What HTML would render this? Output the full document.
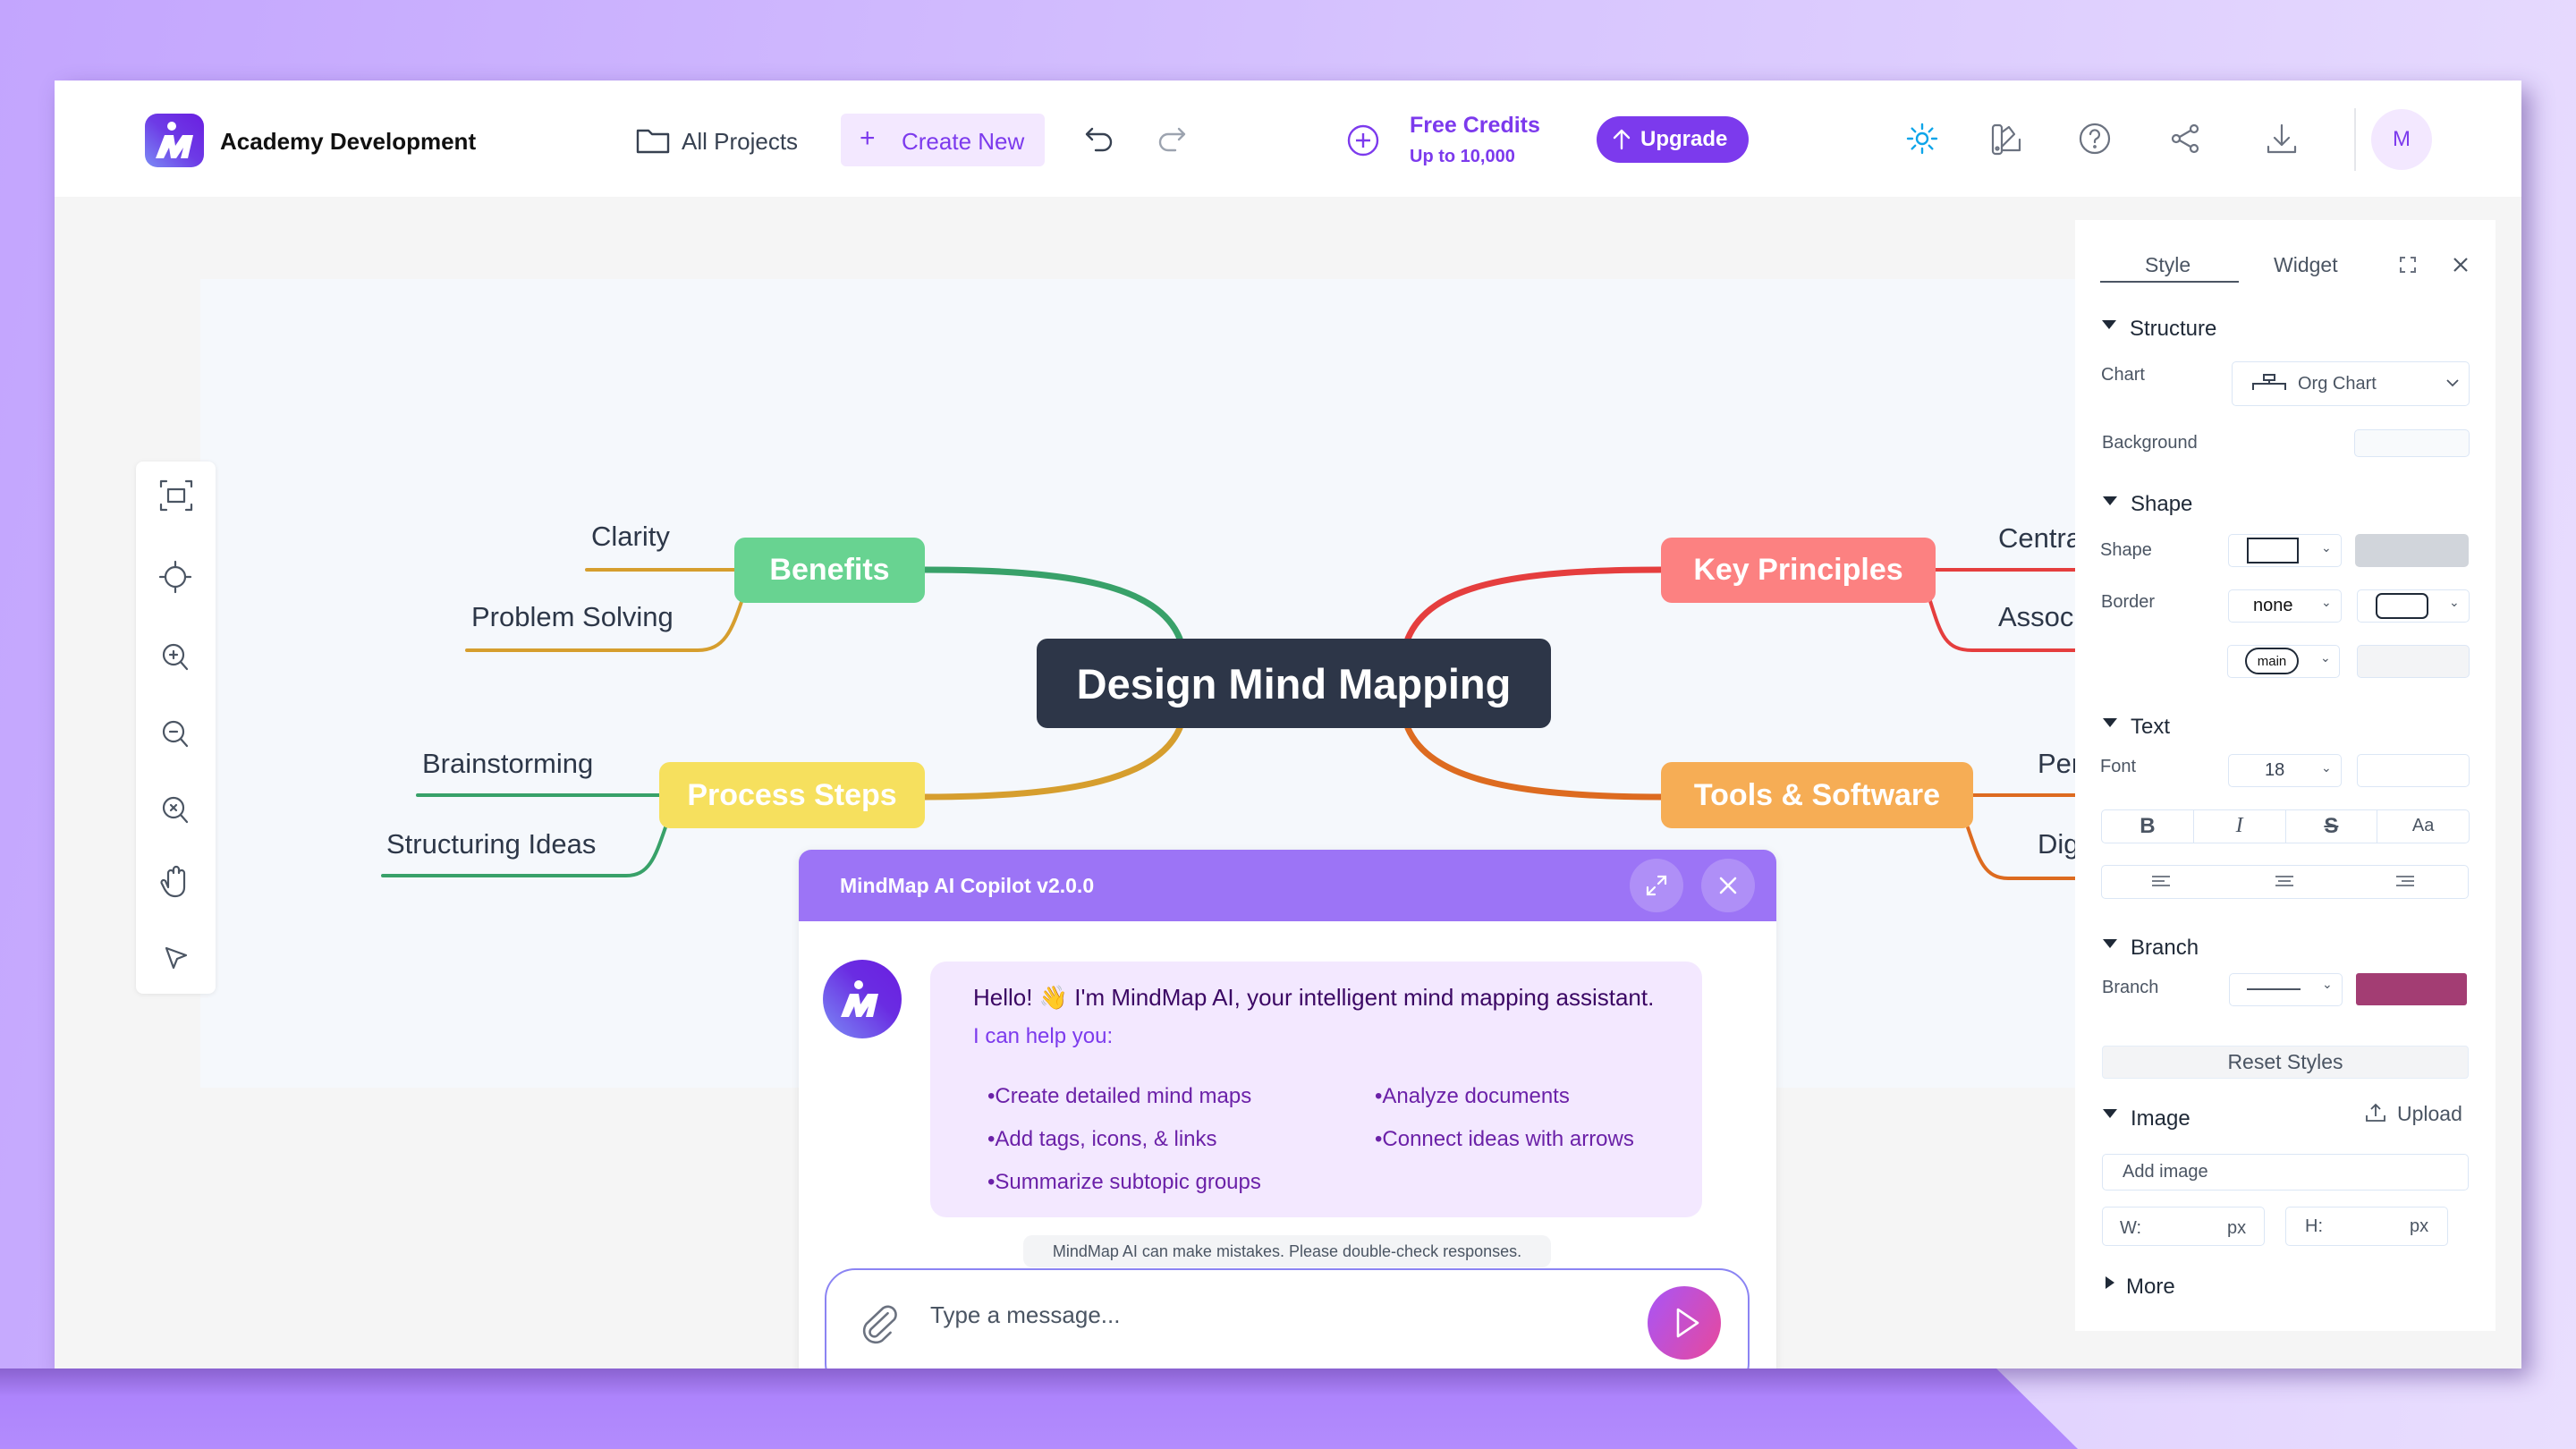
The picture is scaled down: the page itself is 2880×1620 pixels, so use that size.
<!DOCTYPE html>
<html><head><meta charset="utf-8"><style>
*{box-sizing:border-box;margin:0;padding:0}
body{width:2880px;height:1620px;overflow:hidden;position:relative;font-family:"Liberation Sans",sans-serif;background:linear-gradient(100deg,#c3a5fe 0%,#d6c3fe 50%,#e9defe 100%)}
.a{position:absolute}
.win{left:61px;top:90px;width:2758px;height:1440px;background:#f5f5f5;overflow:hidden;box-shadow:10px 10px 24px rgba(70,40,130,.45)}
.hdr{left:0;top:0;width:2758px;height:130px;background:#fff}
.t{white-space:nowrap}
.ico{stroke:#6b7280;fill:none;stroke-width:2.2;stroke-linecap:round;stroke-linejoin:round}
.lbl{font-size:20px;color:#4b5563}
.sec{font-size:24px;color:#1f2937}
.box{border:1.5px solid #dbe6f5;border-radius:5px;background:#fff}
.tri{width:0;height:0;border-left:8px solid transparent;border-right:8px solid transparent;border-top:10px solid #1f2937}
.chev{font-size:14px;color:#4b5563}
.node{color:#fff;font-weight:bold;border-radius:12px;display:flex;align-items:center;justify-content:center;white-space:nowrap}
.leaf{font-size:31px;color:#2d3748;white-space:nowrap}
.bul{font-size:24px;color:#6b21a8;white-space:nowrap}
</style></head><body>
<div class="a win">
 <div class="a hdr">
  <svg class="a" style="left:101px;top:37px" width="66" height="60" viewBox="0 0 66 60"><defs><linearGradient id="lg" x1="0" y1="1" x2="1" y2="0"><stop offset="0" stop-color="#7b8cf5"/><stop offset=".5" stop-color="#6d3be6"/><stop offset="1" stop-color="#6a1fe0"/></linearGradient></defs><rect width="66" height="60" rx="14" fill="url(#lg)"/><circle cx="30" cy="14" r="5" fill="#fff"/><path d="M12 50 L22 24 L32 24 L34 36 L42 24 L54 24 L48 50 L40 50 L43 38 L35 50 L29 50 L27 38 L21 50Z" fill="#fff"/></svg>
  <div class="a t" style="left:185px;top:53px;font-size:26px;font-weight:bold;color:#111">Academy Development</div>
  <svg class="a" style="left:650px;top:52px" width="38" height="30" viewBox="0 0 38 30"><path d="M2 4h12l4 4h18v20H2z" fill="none" stroke="#374151" stroke-width="2.4" stroke-linejoin="round"/></svg>
  <div class="a t" style="left:701px;top:53px;font-size:26px;color:#374151">All Projects</div>
  <div class="a" style="left:879px;top:37px;width:228px;height:59px;background:#f3e8ff;border-radius:6px"></div>
  <div class="a t" style="left:900px;top:48px;font-size:30px;color:#7c3aed">+</div>
  <div class="a t" style="left:947px;top:53px;font-size:26px;color:#7c3aed">Create New</div>
  <svg class="a" style="left:1150px;top:50px" width="36" height="32" viewBox="0 0 36 32"><path d="M10 4 L4 10 L10 16 M4 10 H22 A9 9 0 0 1 22 28 H14" fill="none" stroke="#374151" stroke-width="2.4" stroke-linecap="round" stroke-linejoin="round"/></svg>
  <svg class="a" style="left:1231px;top:50px" width="36" height="32" viewBox="0 0 36 32"><path d="M26 4 L32 10 L26 16 M32 10 H14 A9 9 0 0 0 14 28 H22" fill="none" stroke="#9ca3af" stroke-width="2.4" stroke-linecap="round" stroke-linejoin="round"/></svg>
  <svg class="a" style="left:1444px;top:48px" width="38" height="38" viewBox="0 0 38 38"><circle cx="19" cy="19" r="16" fill="none" stroke="#7c3aed" stroke-width="2.4"/><path d="M19 11v16M11 19h16" stroke="#7c3aed" stroke-width="2.4"/></svg>
  <div class="a t" style="left:1515px;top:36px;font-size:25px;font-weight:bold;color:#7c3aed">Free Credits</div>
  <div class="a t" style="left:1515px;top:74px;font-size:20px;font-weight:bold;color:#7c3aed">Up to 10,000</div>
  <div class="a" style="left:1724px;top:40px;width:170px;height:52px;background:#7c3aed;border-radius:26px"></div>
  <svg class="a" style="left:1740px;top:52px" width="24" height="28" viewBox="0 0 24 28"><path d="M12 24V4M4 12l8-8 8 8" fill="none" stroke="#fff" stroke-width="2.4" stroke-linecap="round" stroke-linejoin="round"/></svg>
  <div class="a t" style="left:1773px;top:52px;font-size:24px;font-weight:bold;color:#fff">Upgrade</div>
  <svg class="a" style="left:2069px;top:46px" width="38" height="38" viewBox="0 0 38 38"><g stroke="#0ea5e9" stroke-width="2.4" fill="none" stroke-linecap="round"><circle cx="19" cy="19" r="6"/><path d="M19 3v5M19 30v5M3 19h5M30 19h5M7.7 7.7l3.5 3.5M26.8 26.8l3.5 3.5M7.7 30.3l3.5-3.5M26.8 11.2l3.5-3.5"/></g></svg>
  <svg class="a" style="left:2163px;top:46px" width="40" height="40" viewBox="0 0 40 40"><g class="ico"><rect x="4" y="4" width="10" height="32" rx="3"/><path d="M14 12l8-6 6 8-14 14M14 32h20V20"/><circle cx="9" cy="30" r="1.5"/></g></svg>
  <svg class="a" style="left:2262px;top:46px" width="38" height="38" viewBox="0 0 38 38"><g class="ico"><circle cx="19" cy="19" r="16"/><path d="M14 14a5 5 0 1 1 7 5c-2 1-2 2-2 4"/><circle cx="19" cy="28" r=".8"/></g></svg>
  <svg class="a" style="left:2363px;top:46px" width="38" height="38" viewBox="0 0 38 38"><g class="ico"><circle cx="29" cy="8" r="4"/><circle cx="9" cy="19" r="4"/><circle cx="29" cy="30" r="4"/><path d="M13 17l12-7M13 21l12 7"/></g></svg>
  <svg class="a" style="left:2471px;top:46px" width="38" height="38" viewBox="0 0 38 38"><g class="ico"><path d="M19 4v22M11 18l8 8 8-8M4 28v6h30v-6"/></g></svg>
  <div class="a" style="left:2571px;top:31px;width:2px;height:70px;background:#e5e7eb"></div>
  <div class="a" style="left:2590px;top:32px;width:68px;height:68px;border-radius:50%;background:#f3e8ff;color:#7c3aed;font-size:24px;display:flex;align-items:center;justify-content:center">M</div>
 </div>

 <div class="a" style="left:163px;top:222px;width:2200px;height:904px;background:#f5f8fc"></div>
 <svg class="a" style="left:-61px;top:-90px" width="2880" height="1620" viewBox="0 0 2880 1620">
  <g fill="none" stroke-linecap="round">
   <path d="M1034 637 C1200 637 1295 655 1319 714" stroke="#38a169" stroke-width="7"/>
   <path d="M1034 891 C1200 891 1295 870 1319 814" stroke="#d69e2e" stroke-width="7"/>
   <path d="M1857 637 C1690 637 1598 655 1574 714" stroke="#e53e3e" stroke-width="7"/>
   <path d="M1857 891 C1690 891 1598 870 1574 814" stroke="#dd6b20" stroke-width="7"/>
   <path d="M656 637 H830" stroke="#d69e2e" stroke-width="4"/>
   <path d="M522 727 H780 C810 727 818 705 830 670" stroke="#d69e2e" stroke-width="4"/>
   <path d="M467 889 H740" stroke="#38a169" stroke-width="4"/>
   <path d="M428 979 H700 C725 979 732 960 744 925" stroke="#38a169" stroke-width="4"/>
   <path d="M2160 637 H2340" stroke="#e53e3e" stroke-width="4"/>
   <path d="M2158 672 C2170 710 2175 727 2205 727 H2340" stroke="#e53e3e" stroke-width="4"/>
   <path d="M2200 889 H2340" stroke="#dd6b20" stroke-width="4"/>
   <path d="M2200 925 C2212 960 2218 982 2245 982 H2340" stroke="#dd6b20" stroke-width="4"/>
  </g>
 </svg>
 <div class="a node" style="left:1098px;top:624px;width:575px;height:100px;background:#2d3648;font-size:47px">Design Mind Mapping</div>
 <div class="a node" style="left:760px;top:511px;width:213px;height:73px;background:#68d391;font-size:34px">Benefits</div>
 <div class="a node" style="left:676px;top:762px;width:297px;height:74px;background:#f6e05e;font-size:34px">Process Steps</div>
 <div class="a node" style="left:1796px;top:511px;width:307px;height:73px;background:#fc8181;font-size:34px">Key Principles</div>
 <div class="a node" style="left:1796px;top:762px;width:349px;height:74px;background:#f6ad55;font-size:34px">Tools &amp; Software</div>
 <div class="a leaf" style="left:600px;top:492px">Clarity</div>
 <div class="a leaf" style="left:466px;top:582px">Problem Solving</div>
 <div class="a leaf" style="left:411px;top:746px">Brainstorming</div>
 <div class="a leaf" style="left:371px;top:836px">Structuring Ideas</div>
 <div class="a leaf" style="left:2173px;top:494px">Central</div>
 <div class="a leaf" style="left:2173px;top:582px">Association</div>
 <div class="a leaf" style="left:2217px;top:746px">Per</div>
 <div class="a leaf" style="left:2217px;top:836px">Digital</div>

 <div class="a" style="left:91px;top:426px;width:89px;height:595px;background:#fff;border-radius:8px;box-shadow:0 1px 6px rgba(0,0,0,.08)"></div>
 <svg class="a" style="left:91px;top:426px" width="89" height="595" viewBox="0 0 89 595"><g stroke="#4b5563" stroke-width="2.2" fill="none" stroke-linecap="round" stroke-linejoin="round">
  <path d="M28 28v-6h6M56 22h6v6M62 48v6h-6M34 54h-6v-6"/><rect x="36" y="31" width="18" height="14"/>
  <circle cx="44" cy="129" r="11"/><path d="M44 112v6M44 140v6M27 129h6M55 129h6"/>
  <circle cx="42" cy="216" r="11"/><path d="M50 224l7 8M38 216h8M42 212v8"/>
  <circle cx="42" cy="302" r="11"/><path d="M50 310l7 8M38 302h8"/>
  <circle cx="42" cy="387" r="11"/><path d="M50 395l7 8M39 384l6 6M45 384l-6 6"/>
  <path d="M36 476v-16a3 3 0 0 1 6 0v-4a3 3 0 0 1 6 0v4a3 3 0 0 1 6 0v16c0 6-4 10-10 10s-9-3-12-8l-3-6a2.5 2.5 0 0 1 4-3z"/>
  <path d="M34 544l22 8-10 4-4 10z"/>
 </g></svg>

 <div class="a" style="left:832px;top:860px;width:1093px;height:640px;background:#fff;border-radius:14px 14px 0 0;box-shadow:0 2px 10px rgba(0,0,0,.08);overflow:hidden">
  <div class="a" style="left:0;top:0;width:1093px;height:80px;background:#9c74f6"></div>
  <div class="a t" style="left:46px;top:27px;font-size:23px;font-weight:bold;color:#fff">MindMap AI Copilot v2.0.0</div>
  <div class="a" style="left:929px;top:10px;width:60px;height:60px;border-radius:50%;background:rgba(255,255,255,.2)"></div>
  <svg class="a" style="left:944px;top:25px" width="30" height="30" viewBox="0 0 30 30"><path d="M17 5h8v8M25 5l-8 8M13 25H5v-8M5 25l8-8" fill="none" stroke="#fff" stroke-width="2.2" stroke-linecap="round"/></svg>
  <div class="a" style="left:1009px;top:10px;width:60px;height:60px;border-radius:50%;background:rgba(255,255,255,.2)"></div>
  <svg class="a" style="left:1027px;top:28px" width="24" height="24" viewBox="0 0 24 24"><path d="M4 4l16 16M20 4L4 20" stroke="#fff" stroke-width="2.6" stroke-linecap="round"/></svg>
  <svg class="a" style="left:27px;top:123px" width="88" height="88" viewBox="0 0 88 88"><defs><linearGradient id="ag" x1="0" y1="1" x2="1" y2="0"><stop offset="0" stop-color="#7b8cf5"/><stop offset=".6" stop-color="#6a2ce2"/><stop offset="1" stop-color="#6a1fe0"/></linearGradient></defs><circle cx="44" cy="44" r="44" fill="url(#ag)"/><circle cx="40" cy="28" r="5" fill="#fff"/><path d="M20 64 L30 38 L40 38 L42 50 L50 38 L62 38 L56 64 L48 64 L51 52 L43 64 L37 64 L35 52 L29 64Z" fill="#fff"/></svg>
  <div class="a" style="left:147px;top:125px;width:863px;height:286px;background:#f3e8ff;border-radius:18px"></div>
  <div class="a t" style="left:195px;top:150px;font-size:26px;color:#3b0764">Hello! 👋 I'm MindMap AI, your intelligent mind mapping assistant.</div>
  <div class="a t" style="left:195px;top:195px;font-size:24px;color:#7c3aed">I can help you:</div>
  <div class="a bul" style="left:211px;top:262px">•Create detailed mind maps</div>
  <div class="a bul" style="left:644px;top:262px">•Analyze documents</div>
  <div class="a bul" style="left:211px;top:310px">•Add tags, icons, &amp; links</div>
  <div class="a bul" style="left:644px;top:310px">•Connect ideas with arrows</div>
  <div class="a bul" style="left:211px;top:358px">•Summarize subtopic groups</div>
  <div class="a" style="left:251px;top:431px;width:590px;height:36px;background:#f3f4f6;border-radius:10px;font-size:18px;color:#4b5563;display:flex;align-items:center;justify-content:center">MindMap AI can make mistakes. Please double-check responses.</div>
  <div class="a" style="left:29px;top:468px;width:1034px;height:140px;border:2px solid #8b84f3;border-radius:34px;background:#fff"></div>
  <svg class="a" style="left:68px;top:505px" width="44" height="48" viewBox="0 0 44 48"><path d="M30 12 L14 32 a5 5 0 0 0 8 6 L38 18 a9 9 0 0 0 -14 -11 L8 27 a13 13 0 0 0 20 16 L36 33" fill="none" stroke="#6b7280" stroke-width="2.6" stroke-linecap="round" transform="rotate(8 22 24)"/></svg>
  <div class="a t" style="left:147px;top:505px;font-size:26px;color:#4b5563">Type a message...</div>
  <div class="a" style="left:949px;top:488px;width:82px;height:82px;border-radius:50%;background:linear-gradient(120deg,#a855f7,#e8489c)"></div>
  <svg class="a" style="left:975px;top:510px" width="36" height="38" viewBox="0 0 36 38"><path d="M8 4 L30 19 L8 34Z" fill="none" stroke="#fff" stroke-width="2.6" stroke-linejoin="round"/></svg>
 </div>

 <div class="a" style="left:2259px;top:156px;width:470px;height:1242px;background:#fff"></div>
 <div class="a" style="left:-61px;top:-90px;width:2880px;height:1620px;pointer-events:none">
  <div class="a t" style="left:2398px;top:283px;font-size:23px;color:#4b5563">Style</div>
  <div class="a" style="left:2348px;top:314px;width:155px;height:2px;background:#4b5563"></div>
  <div class="a t" style="left:2542px;top:283px;font-size:23px;color:#4b5563">Widget</div>
  <svg class="a" style="left:2682px;top:286px" width="20" height="20" viewBox="0 0 20 20"><path d="M2 7V2h5M13 2h5v5M18 13v5h-5M7 18H2v-5" fill="none" stroke="#6b7280" stroke-width="2"/></svg>
  <svg class="a" style="left:2741px;top:286px" width="20" height="20" viewBox="0 0 20 20"><path d="M3 3l14 14M17 3L3 17" stroke="#4b5563" stroke-width="2.2"/></svg>

  <div class="a tri" style="left:2350px;top:358px"></div><div class="a t sec" style="left:2381px;top:354px">Structure</div>
  <div class="a t lbl" style="left:2349px;top:408px">Chart</div>
  <div class="a box" style="left:2495px;top:404px;width:266px;height:50px"></div>
  <svg class="a" style="left:2517px;top:416px" width="40" height="24" viewBox="0 0 40 24"><path d="M14 3h12v6H14zM20 9v4M2 20v-7h36v7" fill="none" stroke="#374151" stroke-width="2"/></svg>
  <div class="a t lbl" style="left:2569px;top:418px">Org Chart</div>
  <svg class="a" style="left:2734px;top:423px" width="16" height="10" viewBox="0 0 16 10"><path d="M2 2l6 6 6-6" fill="none" stroke="#4b5563" stroke-width="1.8"/></svg>
  <div class="a t lbl" style="left:2350px;top:484px">Background</div>
  <div class="a box" style="left:2632px;top:480px;width:129px;height:31px;background:#f8fafc"></div>

  <div class="a tri" style="left:2351px;top:555px"></div><div class="a t sec" style="left:2382px;top:550px">Shape</div>
  <div class="a t lbl" style="left:2348px;top:604px">Shape</div>
  <div class="a box" style="left:2491px;top:597px;width:127px;height:37px"></div>
  <div class="a" style="left:2512px;top:601px;width:58px;height:29px;border:2px solid #1f2937"></div>
  <div class="a chev" style="left:2595px;top:604px">⌄</div>
  <div class="a" style="left:2633px;top:597px;width:127px;height:37px;background:#d1d5db;border-radius:5px"></div>
  <div class="a t lbl" style="left:2349px;top:662px">Border</div>
  <div class="a box" style="left:2491px;top:659px;width:127px;height:37px"></div>
  <div class="a t" style="left:2519px;top:666px;font-size:20px;color:#111">none</div>
  <div class="a chev" style="left:2595px;top:665px">⌄</div>
  <div class="a box" style="left:2635px;top:659px;width:126px;height:37px"></div>
  <div class="a" style="left:2656px;top:663px;width:59px;height:29px;border:2px solid #1f2937;border-radius:7px"></div>
  <div class="a chev" style="left:2738px;top:665px">⌄</div>
  <div class="a box" style="left:2490px;top:721px;width:126px;height:37px"></div>
  <div class="a" style="left:2510px;top:724px;width:60px;height:30px;border:2px solid #1f2937;border-radius:15px;font-size:15px;color:#111;display:flex;align-items:center;justify-content:center">main</div>
  <div class="a chev" style="left:2594px;top:727px">⌄</div>
  <div class="a box" style="left:2635px;top:721px;width:126px;height:37px;background:#f3f4f6"></div>

  <div class="a tri" style="left:2351px;top:803px"></div><div class="a t sec" style="left:2382px;top:799px">Text</div>
  <div class="a t lbl" style="left:2348px;top:846px">Font</div>
  <div class="a box" style="left:2491px;top:843px;width:127px;height:37px"></div>
  <div class="a t" style="left:2532px;top:850px;font-size:20px;color:#374151">18</div>
  <div class="a chev" style="left:2595px;top:850px">⌄</div>
  <div class="a box" style="left:2635px;top:843px;width:126px;height:37px"></div>
  <div class="a box" style="left:2349px;top:905px;width:412px;height:38px;display:flex">
   <div style="flex:1;border-right:1.5px solid #dbe6f5;text-align:center;font-size:24px;font-weight:bold;color:#4b5563;line-height:35px">B</div>
   <div style="flex:1;border-right:1.5px solid #dbe6f5;text-align:center;font-size:24px;font-style:italic;color:#4b5563;line-height:35px;font-family:'Liberation Serif',serif">I</div>
   <div style="flex:1;border-right:1.5px solid #dbe6f5;text-align:center;font-size:24px;font-weight:bold;color:#4b5563;line-height:35px;text-decoration:line-through">S</div>
   <div style="flex:1;text-align:center;font-size:20px;color:#4b5563;line-height:35px">Aa</div>
  </div>
  <div class="a box" style="left:2349px;top:967px;width:411px;height:38px"></div>
  <svg class="a" style="left:2404px;top:977px" width="330" height="18" viewBox="0 0 330 18"><g stroke="#4b5563" stroke-width="1.6"><path d="M2 3h20M2 8h14M2 13h20"/><path d="M140 3h20M143 8h14M140 13h20"/><path d="M275 3h20M281 8h14M275 13h20"/></g></svg>

  <div class="a tri" style="left:2351px;top:1050px"></div><div class="a t sec" style="left:2382px;top:1046px">Branch</div>
  <div class="a t lbl" style="left:2350px;top:1093px">Branch</div>
  <div class="a box" style="left:2492px;top:1088px;width:127px;height:37px"></div>
  <div class="a" style="left:2512px;top:1105px;width:60px;height:2px;background:#4b5563"></div>
  <div class="a chev" style="left:2596px;top:1092px">⌄</div>
  <div class="a" style="left:2634px;top:1088px;width:124px;height:36px;background:#a33d73;border-radius:3px"></div>
  <div class="a" style="left:2350px;top:1169px;width:410px;height:37px;background:#f3f4f6;border:1.5px solid #e5edf7;border-radius:4px;font-size:23px;color:#4b5563;display:flex;align-items:center;justify-content:center">Reset Styles</div>

  <div class="a tri" style="left:2351px;top:1240px"></div><div class="a t sec" style="left:2382px;top:1237px">Image</div>
  <svg class="a" style="left:2644px;top:1232px" width="24" height="24" viewBox="0 0 24 24"><path d="M12 16V3M7 8l5-5 5 5M2 15v6h20v-6" fill="none" stroke="#4b5563" stroke-width="1.8"/></svg>
  <div class="a t" style="left:2680px;top:1232px;font-size:23px;color:#4b5563">Upload</div>
  <div class="a box" style="left:2350px;top:1290px;width:410px;height:41px"></div>
  <div class="a t lbl" style="left:2373px;top:1299px">Add image</div>
  <div class="a box" style="left:2350px;top:1349px;width:182px;height:44px"></div>
  <div class="a t lbl" style="left:2370px;top:1362px">W:</div><div class="a t lbl" style="left:2490px;top:1362px">px</div>
  <div class="a box" style="left:2555px;top:1349px;width:182px;height:44px"></div>
  <div class="a t lbl" style="left:2577px;top:1360px">H:</div><div class="a t lbl" style="left:2694px;top:1360px">px</div>
  <div class="a" style="left:2354px;top:1427px;width:0;height:0;border-top:7px solid transparent;border-bottom:7px solid transparent;border-left:10px solid #1f2937"></div>
  <div class="a t sec" style="left:2377px;top:1425px">More</div>
 </div>
</div>
<svg class="a" style="left:0;top:1530px" width="2880" height="90" viewBox="0 0 2880 90"><defs><linearGradient id="bs" x1="0" y1="0" x2="0" y2="1"><stop offset="0" stop-color="#8a62d0"/><stop offset=".35" stop-color="#ad84fc"/><stop offset="1" stop-color="#b38cfd"/></linearGradient></defs><path d="M0 0H2232L2323 90H0Z" fill="url(#bs)"/></svg>
</body></html>
